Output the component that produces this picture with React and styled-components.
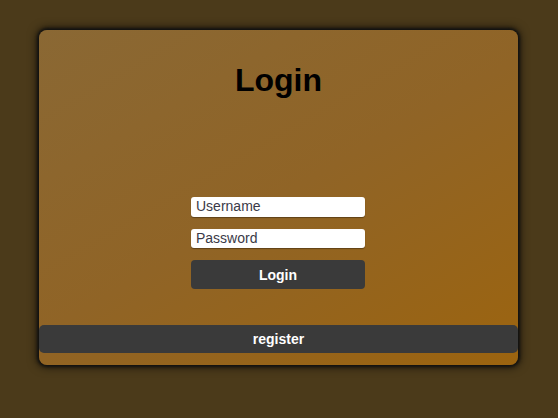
import React from 'react';
import styled, { createGlobalStyle } from 'styled-components';

const GlobalStyle = createGlobalStyle`
  html, body {
    margin: 0;
    padding: 0;
    background: #4b3a1a;
    font-family: Arial, "Liberation Sans", sans-serif;
  }
`;

const Page = styled.main`
  width: 558px;
  height: 418px;
  padding-top: 30px;
  box-sizing: border-box;
  display: flex;
  justify-content: center;
`;

const Card = styled.section`
  width: 479px;
  height: 335px;
  margin-left: -1px;
  box-sizing: border-box;
  border-radius: 8px;
  background: linear-gradient(150deg, #8a6834 0%, #906426 50%, #9c640f 100%);
  box-shadow: 0 0 3px 2px #111, 0 0 8px 3px rgba(0, 0, 0, 0.5);
  display: flex;
  flex-direction: column;
  align-items: center;
`;

const Title = styled.h1`
  margin: 32px 0 0;
  font-size: 32px;
  line-height: 37px;
  font-weight: bold;
  color: #000;
`;

const Form = styled.form`
  margin: 98px 1px 0 0;
  width: 174px;
  display: flex;
  flex-direction: column;
  gap: 12px;
`;

const Input = styled.input`
  height: ${p => p.$h || 20}px;
  box-sizing: border-box;
  border: none;
  border-radius: 3px;
  padding: 0 5px 2px;
  font-family: Arial, "Liberation Sans", sans-serif;
  font-size: 14px;
  background: #fff;
  box-shadow: 0 1px 1px rgba(0, 0, 0, 0.35);
  outline: none;

  &::placeholder {
    color: #3a3a48;
  }
`;

const Button = styled.button`
  height: ${p => p.$tall || 29}px;
  border: none;
  border-radius: ${p => p.$radius || 4}px;
  background: #3a3a3a;
  color: #fff;
  font-family: Arial, "Liberation Sans", sans-serif;
  font-size: 14px;
  font-weight: bold;
  cursor: pointer;
`;

const RegisterBar = styled(Button)`
  margin-top: auto;
  margin-bottom: 12px;
  width: 100%;
`;

export default function App() {
  return (
    <>
      <GlobalStyle />
      <Page>
        <Card>
          <Title>Login</Title>
          <Form onSubmit={e => e.preventDefault()}>
            <Input placeholder="Username" />
            <Input type="password" placeholder="Password" $h={19} />
            <Button type="submit">Login</Button>
          </Form>
          <RegisterBar type="button" $tall={28} $radius={5}>register</RegisterBar>
        </Card>
      </Page>
    </>
  );
}
